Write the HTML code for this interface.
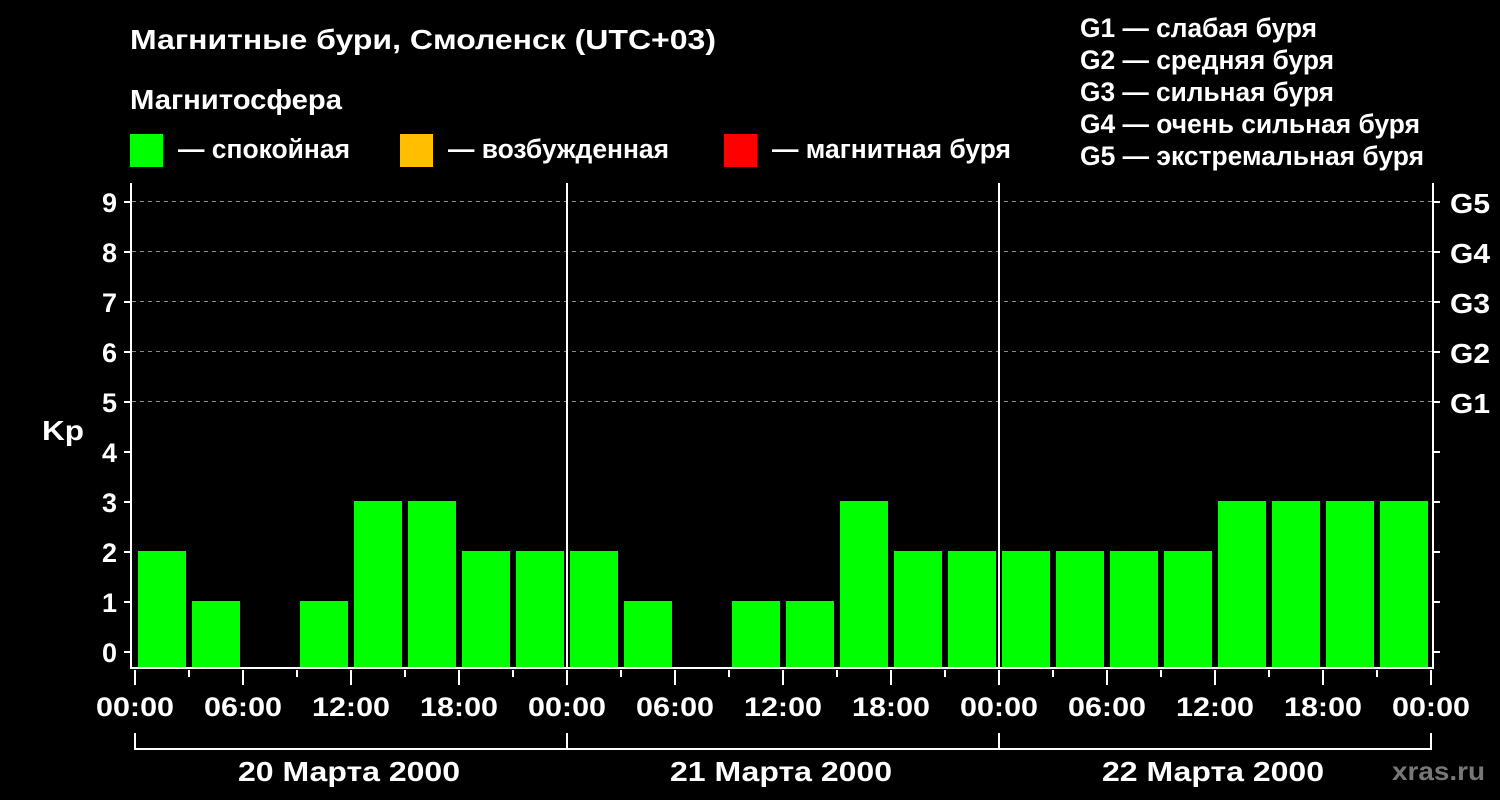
<!DOCTYPE html><html><head><meta charset="utf-8"><style>body{margin:0;background:#000}svg{display:block}text{font-family:"Liberation Sans",sans-serif;font-weight:bold;fill:#fff}</style></head><body>
<svg width="1500" height="800" xmlns="http://www.w3.org/2000/svg">
<rect width="1500" height="800" fill="#000"/>
<text x="130" y="49" font-size="28" textLength="586" lengthAdjust="spacingAndGlyphs">Магнитные бури, Смоленск (UTC+03)</text>
<text x="130" y="109" font-size="28" textLength="212" lengthAdjust="spacingAndGlyphs">Магнитосфера</text>
<rect x="130" y="134" width="33" height="33" fill="#00ff00"/><text x="178" y="158" font-size="27" textLength="172" lengthAdjust="spacingAndGlyphs">— спокойная</text>
<rect x="400" y="134" width="33" height="33" fill="#ffbf00"/><text x="448" y="158" font-size="27" textLength="221" lengthAdjust="spacingAndGlyphs">— возбужденная</text>
<rect x="724" y="134" width="33" height="33" fill="#ff0000"/><text x="772" y="158" font-size="27" textLength="239" lengthAdjust="spacingAndGlyphs">— магнитная буря</text>
<g font-size="27" lengthAdjust="spacingAndGlyphs"><text x="1080" y="37" textLength="237" lengthAdjust="spacingAndGlyphs">G1 — слабая буря</text><text x="1080" y="69" textLength="254" lengthAdjust="spacingAndGlyphs">G2 — средняя буря</text><text x="1080" y="101" textLength="254" lengthAdjust="spacingAndGlyphs">G3 — сильная буря</text><text x="1080" y="133" textLength="340" lengthAdjust="spacingAndGlyphs">G4 — очень сильная буря</text><text x="1080" y="165" textLength="344" lengthAdjust="spacingAndGlyphs">G5 — экстремальная буря</text></g>
<g stroke="#888" stroke-dasharray="4,4" stroke-width="1"><line x1="132" x2="1432" y1="201.5" y2="201.5"/><line x1="132" x2="1432" y1="251.5" y2="251.5"/><line x1="132" x2="1432" y1="301.5" y2="301.5"/><line x1="132" x2="1432" y1="351.5" y2="351.5"/><line x1="132" x2="1432" y1="401.5" y2="401.5"/></g>
<g fill="#00ff00">
<rect x="138" y="551" width="48" height="117"/><rect x="192" y="601" width="48" height="67"/><rect x="300" y="601" width="48" height="67"/><rect x="354" y="501" width="48" height="167"/><rect x="408" y="501" width="48" height="167"/><rect x="462" y="551" width="48" height="117"/><rect x="516" y="551" width="48" height="117"/>
<rect x="570" y="551" width="48" height="117"/><rect x="624" y="601" width="48" height="67"/><rect x="732" y="601" width="48" height="67"/><rect x="786" y="601" width="48" height="67"/><rect x="840" y="501" width="48" height="167"/><rect x="894" y="551" width="48" height="117"/><rect x="948" y="551" width="48" height="117"/>
<rect x="1002" y="551" width="48" height="117"/><rect x="1056" y="551" width="48" height="117"/><rect x="1110" y="551" width="48" height="117"/><rect x="1164" y="551" width="48" height="117"/><rect x="1218" y="501" width="48" height="167"/><rect x="1272" y="501" width="48" height="167"/><rect x="1326" y="501" width="48" height="167"/><rect x="1380" y="501" width="48" height="167"/>
</g>
<g stroke="#fff" stroke-width="2" fill="none">
<polyline points="131,183 131,668 1433,668 1433,183"/>
<line x1="567" y1="183" x2="567" y2="668"/><line x1="999" y1="183" x2="999" y2="668"/>
<path d="M124 652H131M124 602H131M124 552H131M124 502H131M124 452H131M124 402H131M124 352H131M124 302H131M124 252H131M124 202H131"/>
<path d="M1433 652H1440M1433 602H1440M1433 552H1440M1433 502H1440M1433 452H1440M1433 402H1440M1433 352H1440M1433 302H1440M1433 252H1440M1433 202H1440"/>
<path d="M135 670V685M243 670V685M351 670V685M459 670V685M567 670V685M675 670V685M783 670V685M891 670V685M999 670V685M1107 670V685M1215 670V685M1323 670V685M1431 670V685"/>
<path d="M189 670V677M297 670V677M405 670V677M513 670V677M621 670V677M729 670V677M837 670V677M945 670V677M1053 670V677M1161 670V677M1269 670V677M1377 670V677"/>
<path d="M135 733V749H1431V733M567 733V749M999 733V749"/>
</g>
<g font-size="27" text-anchor="end"><text x="117" y="662">0</text><text x="117" y="612">1</text><text x="117" y="562">2</text><text x="117" y="512">3</text><text x="117" y="462">4</text><text x="117" y="412">5</text><text x="117" y="362">6</text><text x="117" y="312">7</text><text x="117" y="262">8</text><text x="117" y="212">9</text></g>
<text x="42" y="440" font-size="28" textLength="42" lengthAdjust="spacingAndGlyphs">Kp</text>
<g font-size="28"><text x="1450" y="213" textLength="40" lengthAdjust="spacingAndGlyphs">G5</text><text x="1450" y="263" textLength="40" lengthAdjust="spacingAndGlyphs">G4</text><text x="1450" y="313" textLength="40" lengthAdjust="spacingAndGlyphs">G3</text><text x="1450" y="363" textLength="40" lengthAdjust="spacingAndGlyphs">G2</text><text x="1450" y="413" textLength="40" lengthAdjust="spacingAndGlyphs">G1</text></g>
<g font-size="27">
<text x="96" y="716" textLength="78" lengthAdjust="spacingAndGlyphs">00:00</text><text x="204" y="716" textLength="78" lengthAdjust="spacingAndGlyphs">06:00</text><text x="312" y="716" textLength="78" lengthAdjust="spacingAndGlyphs">12:00</text><text x="420" y="716" textLength="78" lengthAdjust="spacingAndGlyphs">18:00</text><text x="528" y="716" textLength="78" lengthAdjust="spacingAndGlyphs">00:00</text><text x="636" y="716" textLength="78" lengthAdjust="spacingAndGlyphs">06:00</text><text x="744" y="716" textLength="78" lengthAdjust="spacingAndGlyphs">12:00</text><text x="852" y="716" textLength="78" lengthAdjust="spacingAndGlyphs">18:00</text><text x="960" y="716" textLength="78" lengthAdjust="spacingAndGlyphs">00:00</text><text x="1068" y="716" textLength="78" lengthAdjust="spacingAndGlyphs">06:00</text><text x="1176" y="716" textLength="78" lengthAdjust="spacingAndGlyphs">12:00</text><text x="1284" y="716" textLength="78" lengthAdjust="spacingAndGlyphs">18:00</text><text x="1392" y="716" textLength="78" lengthAdjust="spacingAndGlyphs">00:00</text>
<text x="238" y="781" font-size="28" textLength="222" lengthAdjust="spacingAndGlyphs">20 Марта 2000</text><text x="670" y="781" font-size="28" textLength="222" lengthAdjust="spacingAndGlyphs">21 Марта 2000</text><text x="1102" y="781" font-size="28" textLength="222" lengthAdjust="spacingAndGlyphs">22 Марта 2000</text></g>
<text x="1392" y="780" font-size="26" textLength="93" lengthAdjust="spacingAndGlyphs" style="fill:#777">xras.ru</text>
</svg></body></html>
